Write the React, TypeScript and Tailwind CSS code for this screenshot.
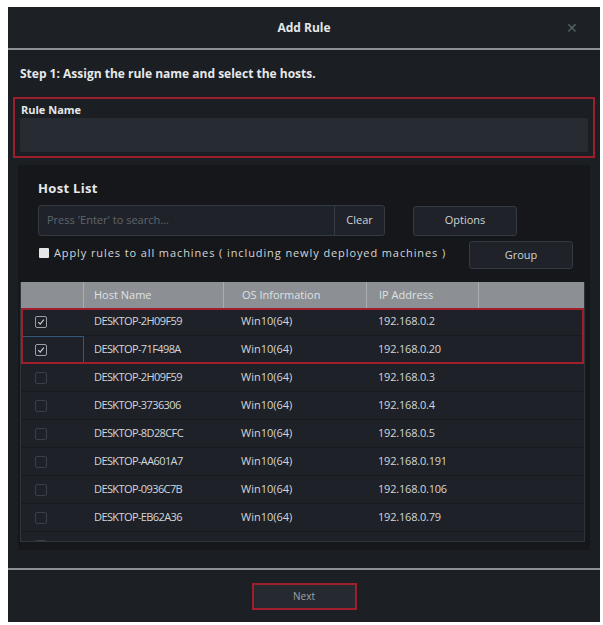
import React from 'react';

// ---------------------------------------------------------------------------
// データ
// ---------------------------------------------------------------------------

interface Host {
  name: string;
  os: string;
  ip: string;
  checked: boolean;
}

const hosts: Host[] = [
  { name: 'DESKTOP-2H09F59', os: 'Win10(64)', ip: '192.168.0.2', checked: true },
  { name: 'DESKTOP-71F498A', os: 'Win10(64)', ip: '192.168.0.20', checked: true },
  { name: 'DESKTOP-2H09F59', os: 'Win10(64)', ip: '192.168.0.3', checked: false },
  { name: 'DESKTOP-3736306', os: 'Win10(64)', ip: '192.168.0.4', checked: false },
  { name: 'DESKTOP-8D28CFC', os: 'Win10(64)', ip: '192.168.0.5', checked: false },
  { name: 'DESKTOP-AA601A7', os: 'Win10(64)', ip: '192.168.0.191', checked: false },
  { name: 'DESKTOP-0936C7B', os: 'Win10(64)', ip: '192.168.0.106', checked: false },
  { name: 'DESKTOP-EB62A36', os: 'Win10(64)', ip: '192.168.0.79', checked: false },
  { name: 'DESKTOP-F85FFFE', os: 'Win10(64)', ip: '192.168.0.109', checked: false },
];

const font = { fontFamily: '"Open Sans", "Noto Sans", sans-serif' };

// ---------------------------------------------------------------------------
// パーツ
// ---------------------------------------------------------------------------

function RowCheckbox({ checked }: { checked: boolean }) {
  return (
    <span
      className={
        checked
          ? 'flex h-[12px] w-[12px] items-center justify-center rounded-[2px] border border-[#9aa0a6]'
          : 'flex h-[12px] w-[12px] items-center justify-center rounded-[2px] border border-[#3a4047]'
      }
    >
      {checked && (
        <svg width="8" height="8" viewBox="0 0 8 8" fill="none">
          <path d="M1.2 4.2 L3.2 6.2 L6.8 1.6" stroke="#c8ccd0" strokeWidth="1.2" />
        </svg>
      )}
    </span>
  );
}

function HostRow({ host, focused }: { host: Host; focused?: boolean }) {
  return (
    <div className="flex h-[28px] items-center border-b border-[#171a1e] bg-[#1e2228] text-[11px] text-[#d3d6d9]">
      <div
        className={
          focused
            ? 'flex h-full w-[63px] items-center border border-[#35597a] pl-[13px]'
            : 'flex h-full w-[63px] items-center pl-[14px]'
        }
      >
        <RowCheckbox checked={host.checked} />
      </div>
      <div className="w-[139px] pl-[10px] tracking-[-0.6px]">{host.name}</div>
      <div className="w-[143px] pl-[18px]">{host.os}</div>
      <div className="pl-[12px] tracking-[-0.2px]">{host.ip}</div>
    </div>
  );
}

// ---------------------------------------------------------------------------
// Page
// ---------------------------------------------------------------------------

export default function App() {
  return (
    <div className="h-[625px] w-[603px] bg-white pl-[8px] pt-[7px]" style={font}>
      <div className="flex h-[615px] w-[592px] flex-col bg-[#1b1e22]">
        {/* ヘッダー */}
        <div className="relative flex h-[41px] items-center justify-center bg-[#1d2025]">
          <span className="text-[12px] font-bold text-[#e4e6e8]">Add Rule</span>
          <span className="absolute right-[22px] top-[14px] text-[14px] leading-none text-[#5a5f65]">
            ✕
          </span>
        </div>
        <div className="h-[2px] bg-[#8d9195]" />

        {/* 本体 */}
        <div className="flex flex-1 flex-col px-[5px] pt-[16px]">
          <div className="pl-[7px] text-[12px] font-bold leading-[16px] text-[#e6e8ea]">
            Step 1: Assign the rule name and select the hosts.
          </div>

          {/* Rule Name */}
          <div className="mt-[15px] border-2 border-[#9a1f2c] px-[5px] pb-[4px] pt-[2px]">
            <div className="pl-[1px] text-[11px] font-bold leading-[17px] text-[#e6e8ea]">
              Rule Name
            </div>
            <div className="h-[34px] rounded-[2px] bg-[#272c33]" />
          </div>

          {/* Host List */}
          <div className="mx-[5px] mt-[7px] rounded-[3px] bg-[#15171b] pb-[8px] pt-[14px]">
            <div className="pl-[20px] text-[13px] font-bold leading-[18px] tracking-wide text-[#e6e8ea]">
              Host List
            </div>

            <div className="mt-[8px] flex items-center pl-[20px]">
              <div className="flex h-[31px] w-[347px] rounded-[3px] border border-[#343a41] bg-[#1f2329]">
                <div className="flex flex-1 items-center pl-[8px] text-[11px] text-[#5f656c]">
                  Press 'Enter' to search...
                </div>
                <div className="flex w-[50px] items-center justify-center border-l border-[#343a41] text-[11px] text-[#cfd2d5]">
                  Clear
                </div>
              </div>
              <div className="ml-[28px] flex h-[30px] w-[104px] items-center justify-center rounded-[3px] border border-[#343a41] bg-[#1f2329] text-[11px] text-[#cfd2d5]">
                Options
              </div>
            </div>

            <div className="mt-[1px] flex items-center pl-[21px]">
              <span className="h-[10px] w-[10px] rounded-[1px] bg-[#e4e6e8]" />
              <span className="ml-[5px] text-[11px] tracking-[0.9px] text-[#d3d6d9]">
                Apply rules to all machines ( including newly deployed machines )
              </span>
              <div className="ml-auto mr-[17px] mt-[4px] flex h-[28px] w-[104px] items-center justify-center rounded-[3px] border border-[#343a41] bg-[#1f2329] text-[11px] text-[#cfd2d5]">
                Group
              </div>
            </div>

            {/* テーブル */}
            <div className="ml-[2px] mr-[5px] mt-[13px] h-[260px] overflow-hidden border-x border-b border-[#30353b]">
              <div className="flex h-[26px] items-center bg-[#8c9094] text-[11px] text-[#dfe2e4]">
                <div className="h-full w-[63px] border-r border-[#a9adb1]" />
                <div className="w-[139px] pl-[10px]">Host Name</div>
                <div className="flex h-full w-[143px] items-center border-l border-[#a9adb1] pl-[18px]">
                  OS Information
                </div>
                <div className="flex h-full w-[113px] items-center border-x border-[#a9adb1] pl-[12px]">
                  IP Address
                </div>
              </div>
              <div className="outline-2 -outline-offset-2 outline-[#a01f2c]">
                <HostRow host={hosts[0]} />
                <HostRow host={hosts[1]} focused />
              </div>
              {hosts.slice(2).map((h, i) => (
                <HostRow key={i} host={h} />
              ))}
            </div>
          </div>
        </div>

        {/* フッター */}
        <div className="h-[2px] bg-[#8d9195]" />
        <div className="flex h-[52px] items-center justify-center bg-[#1c1f24]">
          <div className="flex h-[27px] w-[105px] items-center justify-center border-2 border-[#a01f2c] bg-[#262a30] text-[10px] text-[#9ea3a8]">
            Next
          </div>
        </div>
      </div>
    </div>
  );
}
